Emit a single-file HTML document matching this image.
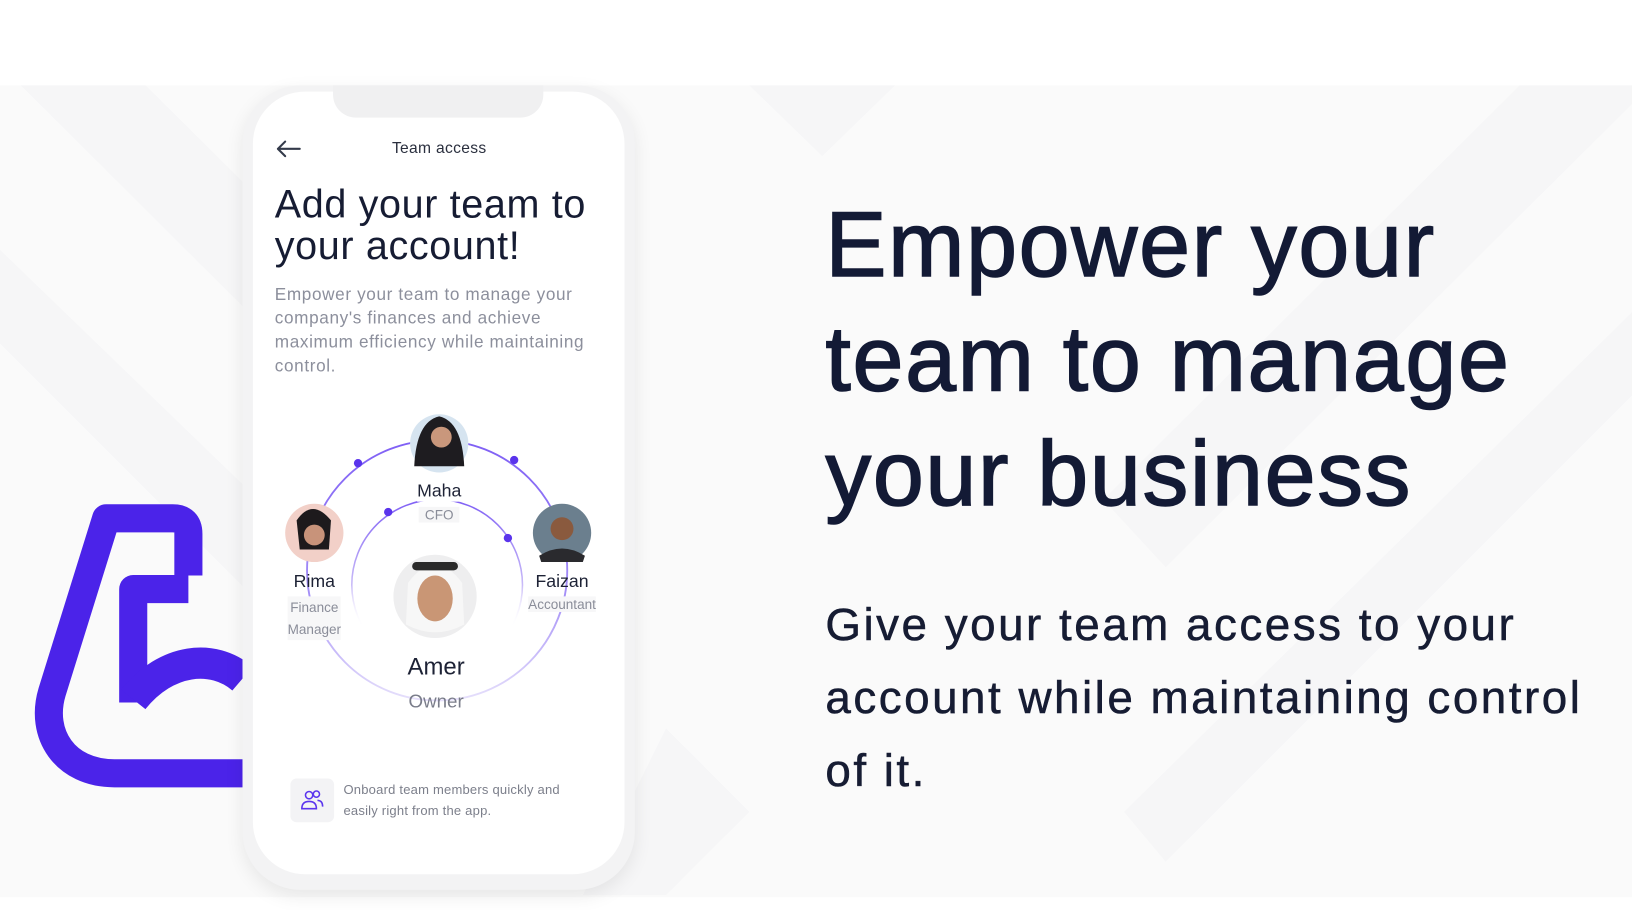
<!DOCTYPE html>
<html><head><meta charset="utf-8"><style>
html,body{margin:0;padding:0;width:1632px;height:910px;overflow:hidden;background:#fff;font-family:"Liberation Sans",sans-serif}
#s{position:absolute;left:0;top:0;width:1568px;height:874px;transform:scale(1.0408);transform-origin:0 0}
.a{position:absolute;white-space:nowrap}
.c{transform:translateX(-50%);text-align:center}
</style></head><body><div id="s">
<svg class="a" style="left:0;top:0" width="1568" height="874">
<defs>
<linearGradient id="g1" x1="0" y1="0" x2="0" y2="1"><stop offset="0" stop-color="#7f5ff5"/><stop offset="0.6" stop-color="#a590f7"/><stop offset="1" stop-color="#e6e0fb"/></linearGradient>
<linearGradient id="g2" x1="0" y1="0" x2="0" y2="1"><stop offset="0" stop-color="#7f5ff5"/><stop offset="0.5" stop-color="#c9bbf8"/><stop offset="0.75" stop-color="#fff" stop-opacity="0"/></linearGradient>
</defs>
<rect x="0" y="82" width="1568" height="780" fill="#fafafa"/>
<g fill="#f6f6f7">
<polygon points="20,82 140,82 560,500 500,560"/>
<polygon points="0,240 0,330 260,590 300,530"/>
<polygon points="720,82 860,82 790,150"/>
<polygon points="1060,82 1568,82 1568,100 1120,545 1060,480 1460,82"/>
<polygon points="1568,300 1568,380 1120,828 1080,780"/>
<polygon points="640,700 720,780 640,860 560,860"/>
</g>
<g fill="none" stroke="#4b23e9" stroke-width="27" stroke-linejoin="round">
<path d="M233,743 H110 C62,743 38,705 50,665 L102,498 H166 Q181,498 181,513 V553"/>
<path d="M181,566 H128 V675"/>
<path d="M128,672 C160,632 205,628 233,652" stroke-width="30"/>
</g>
</svg>
<div class="a" style="left:233px;top:82px;width:377px;height:773px;border-radius:56px;background:#f3f3f4;box-shadow:0 6px 18px rgba(0,0,0,.08)"></div>
<div class="a" style="left:243px;top:88px;width:357px;height:752px;border-radius:50px;background:#fff"></div>
<div class="a" style="left:320px;top:82px;width:202px;height:31px;border-radius:0 0 22px 22px;background:#f0f0f1"></div>
<svg class="a" style="left:264px;top:133px" width="26" height="20"><path d="M24,10 H3 M10,3 L3,10 L10,17" fill="none" stroke="#333a4a" stroke-width="2" stroke-linecap="round" stroke-linejoin="round"/></svg>
<div class="a c" style="left:422px;top:134px;font-size:15px;color:#2a2f3e;letter-spacing:0.3px">Team access</div>
<div class="a" style="left:264px;top:177px;font-size:38px;line-height:40px;color:#161c33;letter-spacing:0.6px">Add your team to<br>your account!</div>
<div class="a" style="left:264px;top:272px;font-size:16.5px;line-height:23px;color:#8c8f9c;letter-spacing:0.6px">Empower your team to manage your<br>company's finances and achieve<br>maximum efficiency while maintaining<br>control.</div>
<svg class="a" style="left:0;top:0" width="800" height="874">
<circle cx="420" cy="548" r="125" fill="none" stroke="url(#g1)" stroke-width="1.8"/>
<circle cx="420" cy="562" r="82" fill="none" stroke="url(#g2)" stroke-width="1.5"/>
<g fill="#5a34ec"><circle cx="344" cy="445" r="4"/><circle cx="494" cy="442" r="4"/><circle cx="373" cy="492" r="4"/><circle cx="488" cy="517" r="4"/></g>
<circle cx="422" cy="426" r="28" fill="#d6e4f0"/><path d="M398,448 Q400,405 422,400 Q444,405 446,448 Z" fill="#1e1c20"/><circle cx="424" cy="420" r="10" fill="#c9977c"/>
<circle cx="302" cy="512" r="28" fill="#f2d0c8"/><path d="M285,500 Q300,478 318,500 L316,528 L288,528 Z" fill="#1d1a1c"/><circle cx="302" cy="514" r="10" fill="#c8937a"/>
<circle cx="540" cy="512" r="28" fill="#6b7f8e"/><circle cx="540" cy="508" r="11" fill="#8a5a3e"/><path d="M518,534 Q540,520 562,534 L560,540 L520,540Z" fill="#2a2a2e"/>
<circle cx="418" cy="573" r="40" fill="#eeeeef"/><path d="M392,560 Q418,525 444,560 L446,600 Q418,615 390,600 Z" fill="#f7f7f7"/><rect x="396" y="540" width="44" height="8" rx="4" fill="#2a2a2a"/><ellipse cx="418" cy="575" rx="17" ry="22" fill="#c99675"/>
</svg>
<div class="a c" style="left:422px;top:462px;font-size:17px;color:#1d2235;background:#fff">Maha</div>
<div class="a c" style="left:422px;top:487px;font-size:13px;color:#8a8d99;background:#f6f6f7;padding:0 6px">CFO</div>
<div class="a c" style="left:302px;top:549px;font-size:17px;color:#1d2235">Rima</div>
<div class="a c" style="left:302px;top:573px;font-size:13px;line-height:21px;color:#8a8d99;background:#f7f7f8">Finance<br>Manager</div>
<div class="a c" style="left:540px;top:549px;font-size:17px;color:#1d2235">Faizan</div>
<div class="a c" style="left:540px;top:573px;font-size:13px;color:#8a8d99;background:#f7f7f8">Accountant</div>
<div class="a c" style="left:419px;top:627px;font-size:23px;color:#1d2235">Amer</div>
<div class="a c" style="left:419px;top:664px;font-size:18px;color:#7a7d8a">Owner</div>
<div class="a" style="left:279px;top:748px;width:42px;height:42px;border-radius:6px;background:#f3f3f5"></div>
<svg class="a" style="left:288px;top:757px" width="24" height="24"><g fill="none" stroke="#5b35ee" stroke-width="1.5"><circle cx="9" cy="7" r="3.5"/><circle cx="16" cy="6" r="3"/><path d="M2,20 Q2,13 9,13 Q16,13 16,20 Z"/><path d="M17,12 Q22,12 22,18"/></g></svg>
<div class="a" style="left:330px;top:750px;font-size:12.5px;line-height:19.5px;color:#7c7f8b;letter-spacing:0.2px">Onboard team members quickly and<br>easily right from the app.</div>
<div class="a" style="left:793px;top:180px;font-size:88px;line-height:110px;color:#131a35;letter-spacing:1.6px;-webkit-text-stroke:1.4px #131a35">Empower your<br>team to manage<br>your business</div>
<div class="a" style="left:793px;top:566px;font-size:44px;line-height:70px;color:#161c33;letter-spacing:2.4px;-webkit-text-stroke:0.5px #161c33">Give your team access to your<br>account while maintaining control<br>of it.</div>
</div></body></html>
